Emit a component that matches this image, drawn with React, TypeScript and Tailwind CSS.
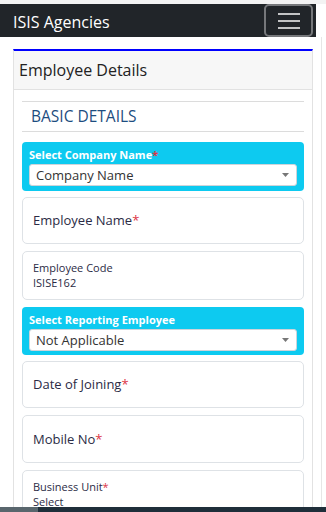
function Req() {
  return <span className="text-[#dc3545]">*</span>;
}

function CyanSelect({ label, value, required, h, mt }: { label: string; value: string; required?: boolean; h: string; mt: string }) {
  return (
    <div className={`${h} ${mt} rounded-[4px] bg-[#0dcaf0] px-[7px] pt-[5px]`}>
      <div className="text-[11px] font-bold leading-[15px] text-white">
        {label}
        {required && <Req />}
      </div>
      <div className="mt-[2px] flex h-[22px] items-center justify-between rounded-[3px] border border-[#ced4da] bg-white pl-[6px] pr-[7px]">
        <span className="text-[13px] leading-none text-[#333]">{value}</span>
        <svg width="7" height="4" viewBox="0 0 7 4">
          <path d="M0 0h7L3.5 4z" fill="#777" />
        </svg>
      </div>
    </div>
  );
}

function FloatInput({ label, required, h, mt }: { label: string; required?: boolean; h: string; mt: string }) {
  return (
    <div className={`${h} ${mt} flex items-center rounded-[5px] border border-[#dee2e6] bg-white pl-[10px]`}>
      <span className="mt-[1px] text-[13px] text-[#2b2b45]">
        {label}
        {required && <Req />}
      </span>
    </div>
  );
}

function FilledInput({ label, value, required, h, mt }: { label: string; value: string; required?: boolean; h: string; mt: string }) {
  return (
    <div className={`${h} ${mt} rounded-[5px] border border-[#dee2e6] bg-white pl-[10px] pt-[8px]`}>
      <div className="text-[11px] leading-[15px] text-[#2b2b45]">
        {label}
        {required && <Req />}
      </div>
      <div className="text-[11px] leading-[15px] text-[#2b2b45]">{value}</div>
    </div>
  );
}

export default function App() {
  return (
    <div className="relative h-[512px] w-[326px] overflow-hidden bg-white font-['Open_Sans',sans-serif]">
      <div className="h-[4px] bg-[#f3f3f3]" />
      {/* Navbar */}
      <nav className="flex h-[33px] w-[316px] items-center justify-between bg-[#212529] pl-[13px] pr-[3px]">
        <span className="mt-[3px] text-[16px] text-white">ISIS Agencies</span>
        <button className="flex h-[33px] w-[49px] flex-col items-center justify-center gap-[5px] rounded-[5px] border-2 border-[#76787b]">
          <span className="block h-[2px] w-[22px] bg-[#c3c4c5]" />
          <span className="block h-[2px] w-[22px] bg-[#c3c4c5]" />
          <span className="block h-[2px] w-[22px] bg-[#c3c4c5]" />
        </button>
      </nav>

      <div className="flex h-[475px]">
        <div className="w-[322px] border-r border-[#e6e6e6] pl-[13px] pt-[12px]">
          {/* Card */}
          <div className="w-[300px] border-x border-t-2 border-x-[#e2e2e2] border-t-[#0000ff] bg-white">
            <div className="flex h-[39px] items-center border-b border-[#e2e2e2] bg-[#f7f7f7] pl-[5px]">
              <span className="text-[16px] text-[#222]">Employee Details</span>
            </div>
            <div className="px-[8px] pt-[11px]">
              <div className="flex h-[31px] items-center border-y border-[#dcdcdc] pl-[9px]">
                <span className="text-[15.5px] text-[#1d4d80]">BASIC DETAILS</span>
              </div>
              <div className="flex flex-col">
                <CyanSelect h="h-[49px]" mt="mt-[10px]" label="Select Company Name" value="Company Name" required />
                <FloatInput h="h-[47px]" mt="mt-[6px]" label="Employee Name" required />
                <FilledInput h="h-[49px]" mt="mt-[7px]" label="Employee Code" value="ISISE162" />
                <CyanSelect h="h-[48px]" mt="mt-[7px]" label="Select Reporting Employee" value="Not Applicable" />
                <FloatInput h="h-[47px]" mt="mt-[6px]" label="Date of Joining" required />
                <FloatInput h="h-[48px]" mt="mt-[7px]" label="Mobile No" required />
                <FilledInput h="h-[48px]" mt="mt-[7px]" label="Business Unit" value="Select" required />
              </div>
            </div>
          </div>
        </div>
      </div>

      {/* bottom system bar */}
      <div className="absolute bottom-0 left-0 flex h-[5px] w-full">
        <div className="w-[38px] bg-[#59666d]" />
        <div className="flex-1 bg-[#1f2e3a]" />
      </div>
    </div>
  );
}
